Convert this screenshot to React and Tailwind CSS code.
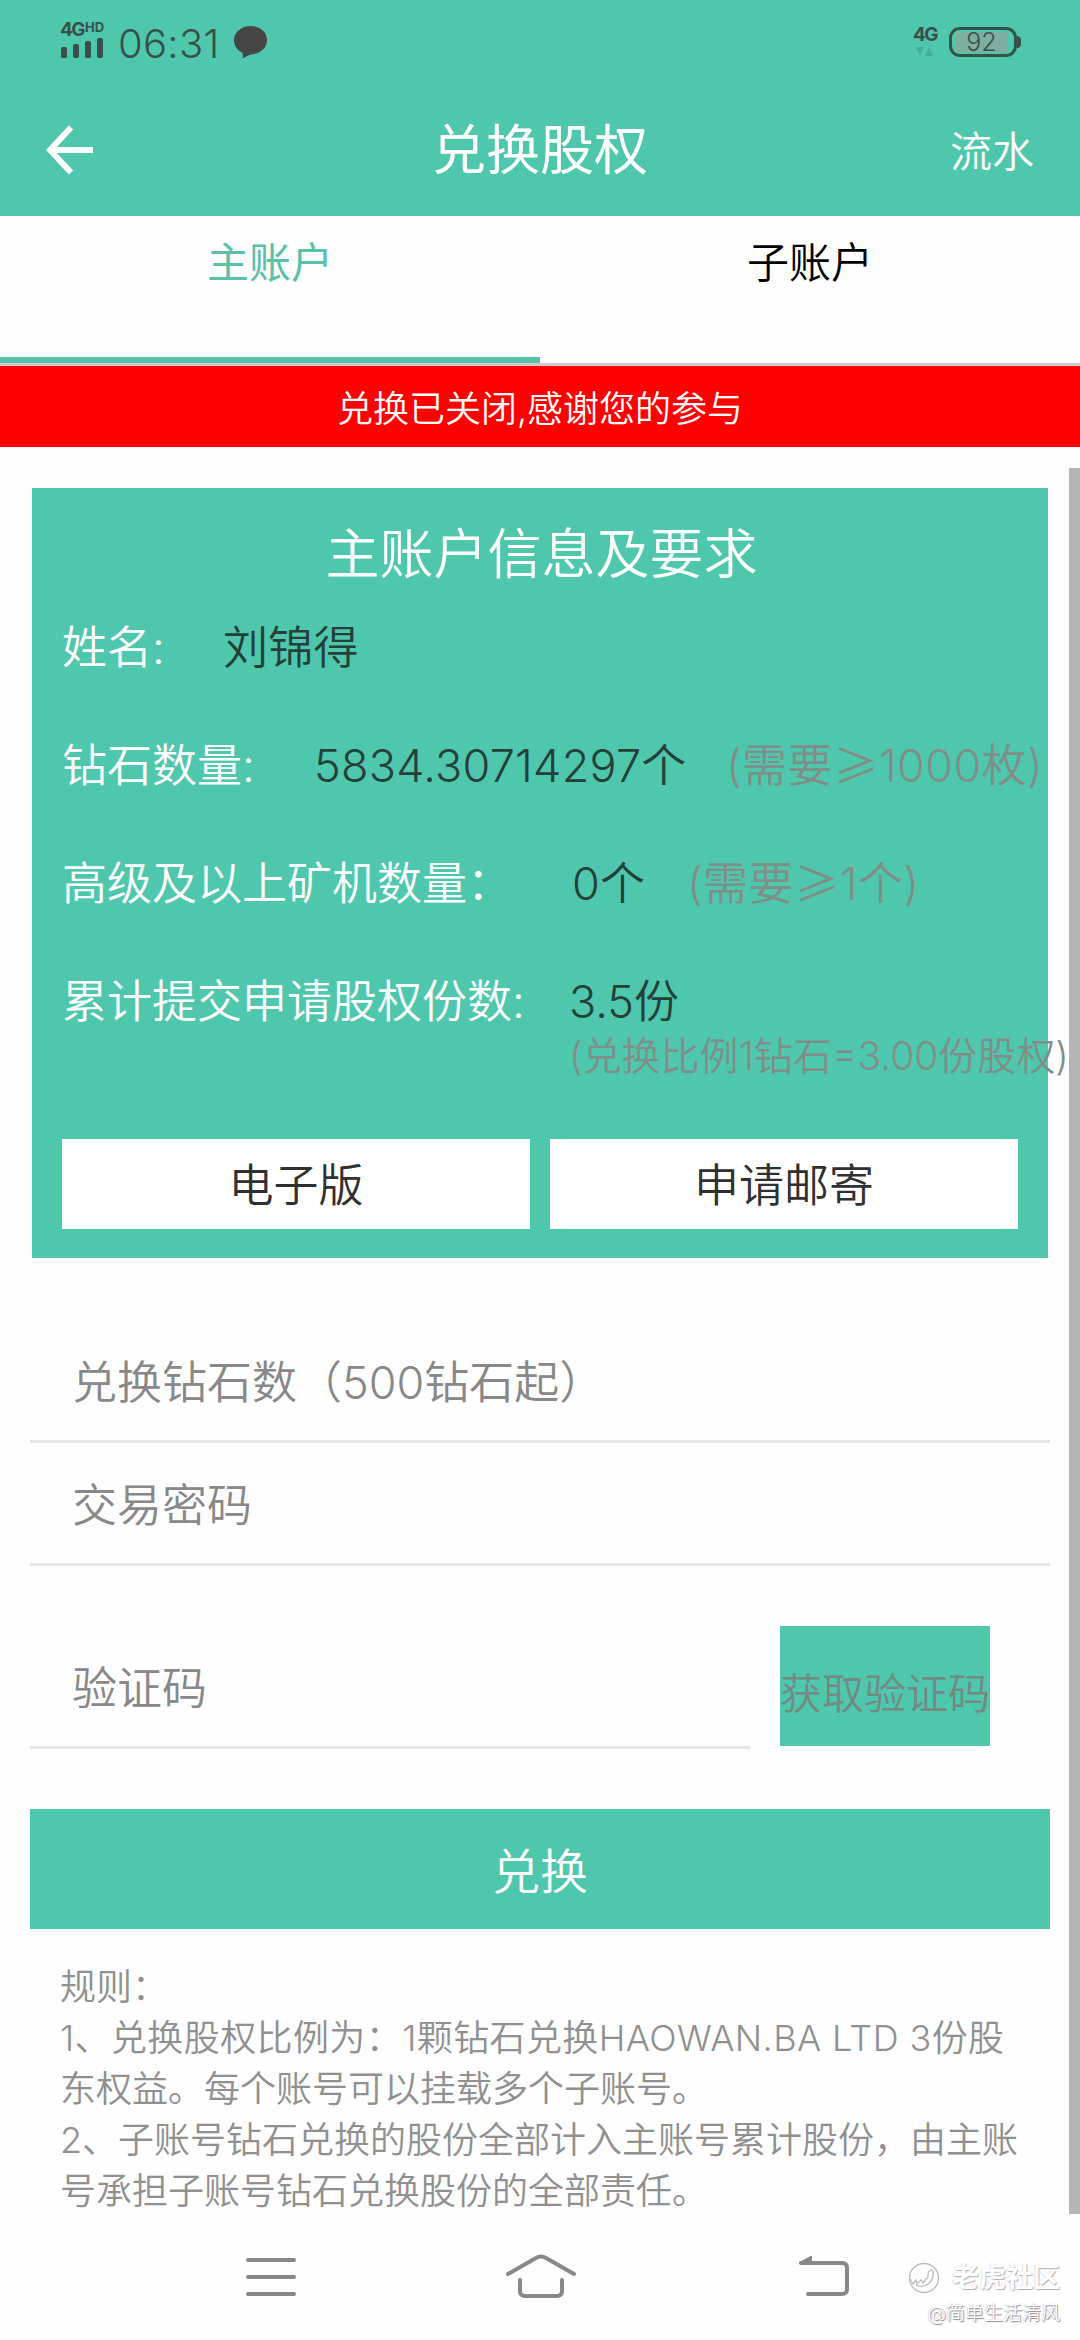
import { useState } from 'react';

const tabs = ['主账户', '子账户'];

const rules = [
  { text: '规则：', spacing: 'tracking-normal' },
  { text: '1、兑换股权比例为：1颗钻石兑换HAOWAN.BA LTD 3份股', spacing: 'tracking-[0.4px]' },
  { text: '东权益。每个账号可以挂载多个子账号。', spacing: 'tracking-normal' },
  { text: '2、子账号钻石兑换的股份全部计入主账号累计股份，由主账', spacing: 'tracking-normal' },
  { text: '号承担子账号钻石兑换股份的全部责任。', spacing: 'tracking-normal' },
];

const StatusBar = () => (
  <div className="h-[84px] flex items-start justify-between pl-[60px] pr-[59px] text-[#37504a]">
    <div className="flex items-start">
      <div className="w-[46px] pt-[22px]">
        <div className="flex items-start font-bold leading-none">
          <span className="w-[25px] shrink-0 text-[19px] leading-[15px] tracking-[-1.5px]">4G</span>
          <span className="text-[13px] leading-[10px]">HD</span>
        </div>
        <svg className="block" width="46" height="21" viewBox="0 0 46 21" fill="currentColor">
          <rect x="1" y="10" width="6" height="11" rx="2" />
          <rect x="13" y="7" width="6" height="14" rx="2" />
          <rect x="25" y="4" width="6" height="17" rx="2" />
          <rect x="37" y="1" width="6" height="20" rx="2" />
        </svg>
      </div>
      <span className="ml-[12px] mt-[24px] w-[103px] text-[40px] leading-[40px] tracking-[0.3px]">06:31</span>
      <svg className="ml-[13px] mt-[26px]" width="34" height="33" viewBox="0 0 34 33" fill="#454545">
        <path d="M17 0C26 0 33 6 33 14S26 28 17 28.500C14 29 12 31 8.500 32.500C9.500 30 9 28 8 26.500C3 24 0 19.500 0 14C0 6 8 0 17 0Z" />
      </svg>
    </div>
    <div className="flex items-start">
      <div className="w-[28px] pt-[26px]">
        <div className="text-[19px] leading-[17px] font-bold tracking-[-1.5px]">4G</div>
        <svg className="ml-[3px] mt-[4px]" width="18" height="9" viewBox="0 0 18 9" fill="#43b097">
          <path d="M0 0H8L4 9ZM9 9H17L13 0Z" />
        </svg>
      </div>
      <div className="ml-[8px] mt-[27px] flex items-center">
        <div className="w-[68px] h-[30px] border-3 rounded-[11px] pl-[4px] pr-[7px] py-[2px]">
          <div className="h-full bg-[#7dae9f] flex items-center justify-center text-[25px] leading-none">92</div>
        </div>
        <div className="w-[4px] h-[12px] bg-[#37504a] rounded-r-full" />
      </div>
    </div>
  </div>
);

const InfoRow = ({ label, labelWidth, value, valueWidth, need }) => (
  <div className="h-[118px] flex items-start text-[45px] leading-[60px] whitespace-nowrap">
    <span className={`${labelWidth} shrink-0 text-white`}>{label}</span>
    <span className={`${valueWidth} shrink-0 text-[#23403a] tracking-[0.25px]`}>{value}</span>
    {need && (
      <span className="flex text-[#808e89] tracking-[0.4px]">
        (需要<span className="w-[46px] -mt-[2px] text-center font-['Noto_Sans_CJK_SC',sans-serif]">≥</span>
        {need})
      </span>
    )}
  </div>
);

const Field = ({ placeholder, type = 'text', className }) => (
  <input
    type={type}
    placeholder={placeholder}
    className={`${className} block pl-[42px] pt-[4px] border-b-3 border-[#e6e6e6] text-[45px] placeholder-[#888888] outline-none`}
  />
);

const NavBar = () => (
  <div className="h-[126px] flex">
    <svg className="ml-[246px] mt-[43px]" width="50" height="42" viewBox="0 0 50 42" stroke="#888" strokeWidth="4" strokeLinecap="round">
      <path d="M2 3H48M2 20H48M2 37H48" />
    </svg>
    <svg className="ml-[210px] mt-[40px]" width="70" height="46" viewBox="0 0 70 46" fill="none" stroke="#888" strokeWidth="4" strokeLinecap="round">
      <path d="M2 20L30 4Q35 1 40 4L68 20M14 26V37Q14 42 19 42H51Q56 42 56 37V26" />
    </svg>
    <svg className="ml-[222px] mt-[40px]" width="52" height="44" viewBox="0 0 52 44" fill="none" stroke="#888" strokeWidth="4" strokeLinecap="round">
      <path d="M3 9H44Q49 9 49 14V35Q49 40 44 40H10" />
      <path d="M2 9L13 3V9Z" fill="#888" strokeWidth="2" strokeLinejoin="round" />
    </svg>
    <div className="ml-auto mr-[20px] mt-[48px] flex flex-col items-end text-white">
      <div className="flex items-center">
        <svg className="mr-[12px]" width="32" height="32" viewBox="0 0 32 32" fill="none" stroke="#bdbdc2" strokeWidth="1.300">
          <circle cx="16" cy="16" r="14.500" />
          <path d="M2 17L5 22L8 18L9 22L13 18L15 21L18 17Q20 17 20 13Q20 9 23 8Q26 9 25 14Q24 19 20 22Q14 26 8 23" />
        </svg>
        <span className="text-[27px] leading-[32px] font-bold [text-shadow:1px_1px_1px_#b0b0b8,-0.5px_-0.5px_1px_#d4d4da]">老虎社区</span>
      </div>
      <span className="mt-[8px] text-[19px] leading-[24px] [text-shadow:1px_1px_1px_#8a8a92,-0.5px_-0.5px_1px_#c8c8ce]">@简单生活清风</span>
    </div>
  </div>
);

const App = () => {
  const [active, setActive] = useState(0);

  return (
    <div className="w-[1080px] h-[2340px] bg-[#fefefe] overflow-hidden font-[350] font-[Inter,'Noto_Sans_CJK_SC',sans-serif]">
      <header className="h-[216px] bg-[#4fc7ac]">
        <StatusBar />
        <div className="h-[132px] grid grid-cols-3 items-center px-[46px] text-white">
          <svg width="48" height="50" viewBox="0 0 48 50" fill="none" stroke="currentColor" strokeWidth="6">
            <path d="M47 25H5M25 2.500L4 25L25 47.500" />
          </svg>
          <h1 className="pt-[2px] text-center text-[54px] leading-[60px] font-normal">兑换股权</h1>
          <span className="pt-[3px] text-right text-[42px] leading-[60px]">流水</span>
        </div>
      </header>

      <nav className="h-[150px] flex border-b-3 border-[#cccccc]">
        {tabs.map((tab, i) => (
          <button
            key={tab}
            onClick={() => setActive(i)}
            className={`w-1/2 flex justify-center pt-[17px] text-[42px] leading-[60px] border-b-6 ${
              active === i ? 'text-[#5ac1a8] border-[#5ac1a8] font-normal' : 'text-black border-transparent'
            }`}
          >
            {tab}
          </button>
        ))}
      </nav>

      <div className="h-[81px] pt-[4px] bg-[#ff0000] text-white text-[36px] flex items-center justify-center">
        兑换已关闭,感谢您的参与
      </div>

      <div className="h-[1767px] flex justify-between items-end">
        <main className="h-full w-[1050px] shrink-0 pl-[30px] pt-[41px]">
          <section className="ml-[2px] w-[1016px] h-[770px] bg-[#4fc7ac] px-[30px] pt-[32px]">
            <h2 className="h-[98px] pl-[3px] text-center text-white text-[54px] leading-[70px]">主账户信息及要求</h2>
            <InfoRow label="姓名:" labelWidth="w-[161px]" value="刘锦得" valueWidth="w-auto" />
            <InfoRow
              label="钻石数量:"
              labelWidth="w-[252px]"
              value="5834.30714297个"
              valueWidth="w-[412px]"
              need="1000枚"
            />
            <InfoRow
              label="高级及以上矿机数量："
              labelWidth="w-[510px]"
              value="0个"
              valueWidth="w-[115px]"
              need="1个"
            />
            <div className="flex items-start text-[45px] leading-[60px] whitespace-nowrap h-[167px]">
              <span className="w-[507px] shrink-0 text-white">累计提交申请股权份数:</span>
              <div>
                <div className="text-[#23403a]">3.5份</div>
                <div className="text-[39px] leading-[48px] text-[#808e89]">(兑换比例1钻石=3.00份股权)</div>
              </div>
            </div>
            <div className="flex gap-[20px]">
              <button className="w-[468px] h-[90px] pt-[4px] bg-white text-[45px] text-[#303030]">电子版</button>
              <button className="w-[468px] h-[90px] pt-[4px] bg-white text-[45px] text-[#303030]">申请邮寄</button>
            </div>
          </section>

          <Field placeholder="兑换钻石数（500钻石起）" className="mt-[62px] w-[1020px] h-[123px]" />
          <Field placeholder="交易密码" type="password" className="w-[1020px] h-[123px]" />
          <div className="mt-[60px] flex items-start gap-[30px]">
            <Field placeholder="验证码" className="w-[720px] h-[123px]" />
            <button className="w-[210px] h-[120px] pt-[15px] bg-[#4fc7ac] text-[#728a83] text-[42px] whitespace-nowrap flex items-center justify-center">
              获取验证码
            </button>
          </div>
          <button className="mt-[60px] pt-[5px] w-[1020px] h-[120px] bg-[#4fc7ac] text-white text-[48px]">兑换</button>
          <div className="mt-[33px] ml-[30px] text-[36px] leading-[51px] text-[#909090] whitespace-nowrap">
            {rules.map((line) => (
              <p key={line.text} className={line.spacing}>{line.text}</p>
            ))}
          </div>
        </main>
        <div className="w-[11px] h-[1746px] bg-[#b5b5b5]" />
      </div>

      <NavBar />
    </div>
  );
};

export default App;
